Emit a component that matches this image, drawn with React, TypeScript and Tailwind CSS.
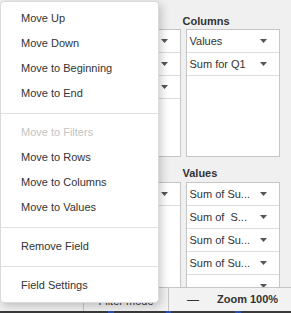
import React from 'react';

type MenuEntry = { label: string; disabled?: boolean } | 'sep';

const menu: MenuEntry[] = [
  { label: 'Move Up' },
  { label: 'Move Down' },
  { label: 'Move to Beginning' },
  { label: 'Move to End' },
  'sep',
  { label: 'Move to Filters', disabled: true },
  { label: 'Move to Rows' },
  { label: 'Move to Columns' },
  { label: 'Move to Values' },
  'sep',
  { label: 'Remove Field' },
  'sep',
  { label: 'Field Settings' },
];

function Arrow() {
  return (
    <svg width="7" height="4" viewBox="0 0 7 4" className="shrink-0">
      <path d="M0 0H7L3.5 4Z" fill="#555" />
    </svg>
  );
}

function FieldRow({ label }: { label: string }) {
  return (
    <div className="flex h-[23px] shrink-0 items-center justify-between border-b border-[#dcdcdc] pl-[3px] pr-[12px]">
      <span className="whitespace-pre">{label}</span>
      <Arrow />
    </div>
  );
}

export default function App() {
  return (
    <div className="relative h-[313px] w-[291px] overflow-hidden bg-[#f0f0f0] font-['Liberation_Sans',Arial,sans-serif] text-[11px] text-[#333]">
      {/* Field list areas (left column sits under the menu) */}
      <div className="flex h-[287px] gap-[5px] pl-[86px] pr-[11px]">
        <div className="flex w-[95px] flex-col">
          <div className="mt-[15px] mb-px h-[13px]" />
          <div className="flex h-[128px] flex-col border border-[#c6c6c6] bg-white">
            <FieldRow label="" />
            <FieldRow label="" />
            <FieldRow label="" />
          </div>
          <div className="mt-[10px] mb-[2px] h-[13px]" />
          <div className="flex flex-1 flex-col overflow-hidden border border-b-0 border-[#c6c6c6] bg-white">
            <FieldRow label="" />
          </div>
        </div>
        <div className="flex w-[95px] flex-col">
          <div className="-ml-[3px] mt-[15px] mb-px h-[13px] font-bold leading-[13px]">Columns</div>
          <div className="flex h-[128px] flex-col border border-[#c6c6c6] bg-white">
            <FieldRow label="Values" />
            <FieldRow label="Sum for Q1" />
          </div>
          <div className="-ml-[3px] mt-[10px] mb-[2px] h-[13px] font-bold leading-[13px]">Values</div>
          <div className="flex flex-1 flex-col overflow-hidden border border-b-0 border-[#c6c6c6] bg-white">
            <FieldRow label="Sum of Su..." />
            <FieldRow label="Sum of  S..." />
            <FieldRow label="Sum of Su..." />
            <FieldRow label="Sum of Su..." />
            <FieldRow label="" />
          </div>
        </div>
      </div>

      {/* Bottom bar */}
      <div className="flex h-[24px] border-t border-[#c6c6c6] bg-[#f2f2f2]">
        <div className="w-[83px]" />
        <div className="flex w-[85px] items-center justify-center border-l border-[#c6c6c6] pt-[3px]">Filter mode</div>
        <div className="flex flex-1 items-center border-l border-[#c6c6c6] pl-[18px]">
          <span className="text-[12px]">—</span>
          <span className="ml-[18px] font-bold">Zoom 100%</span>
        </div>
      </div>
      <div className="flex h-[2px] bg-[#3a3a3a]">
        <div className="ml-[108px] w-[6px] bg-[#2a4fb0]" />
        <div className="ml-[52px] w-[5px] bg-[#2a4fb0]" />
        <div className="ml-[64px] w-[6px] bg-[#2a4fb0]" />
      </div>

      {/* Context menu */}
      <div className="absolute left-0 top-px w-[159px] rounded-[4px] border border-[#dadada] bg-white py-[4px] shadow-[2px_3px_10px_rgba(0,0,0,0.22)]">
        {menu.map((entry, i) =>
          entry === 'sep' ? (
            <div key={i} className="mt-[7px] mb-[6px] h-px bg-[#e0e0e0]" />
          ) : (
            <div
              key={i}
              className={`flex h-[25px] items-center pl-[20px] ${entry.disabled ? 'text-[#c4c4c4]' : 'text-[#333]'}`}
            >
              {entry.label}
            </div>
          ),
        )}
      </div>
    </div>
  );
}
